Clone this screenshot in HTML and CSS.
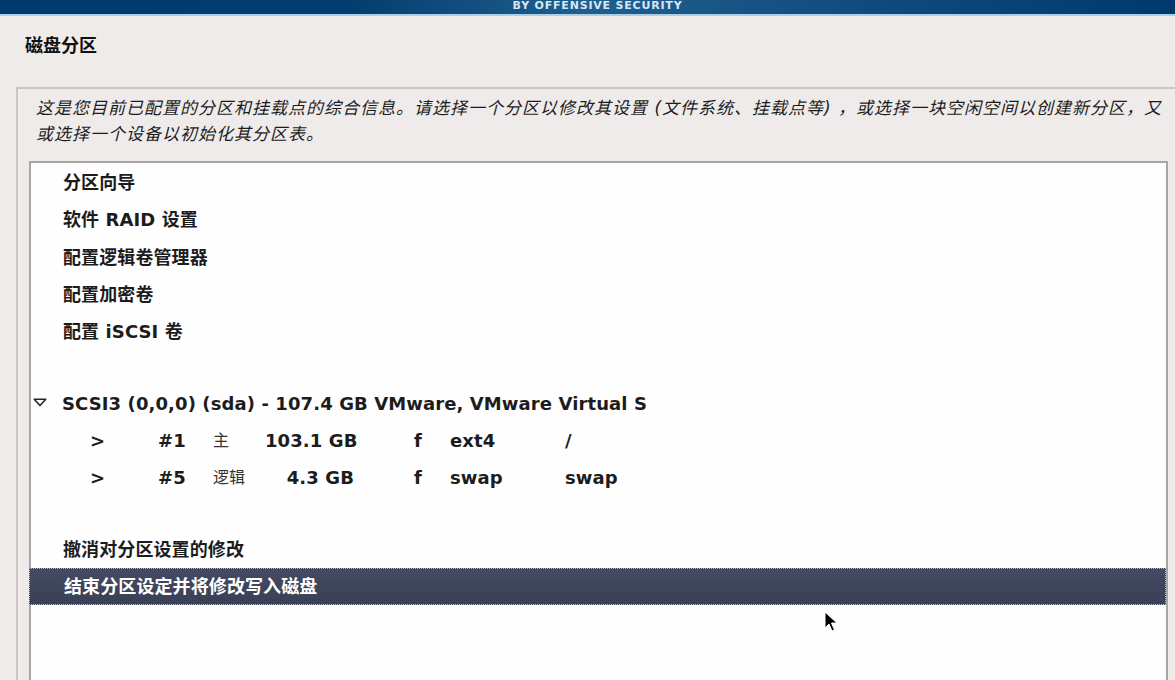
FILE: index.html
```html
<!DOCTYPE html>
<html lang="zh">
<head>
<meta charset="utf-8">
<title>磁盘分区</title>
<link rel="stylesheet" href="styles.css">
</head>
<body>
<div class="banner"><span class="banner-text">BY OFFENSIVE SECURITY</span></div>
<h1 class="title">磁盘分区</h1>
<div class="frame">
  <p class="desc">这是您目前已配置的分区和挂载点的综合信息。请选择一个分区以修改其设置 (文件系统、挂载点等) ，或选择一块空闲空间以创建新分区，又<br>或选择一个设备以初始化其分区表。</p>
  <div class="list">
    <div class="row">分区向导</div>
    <div class="row">软件 RAID 设置</div>
    <div class="row">配置逻辑卷管理器</div>
    <div class="row">配置加密卷</div>
    <div class="row">配置 iSCSI 卷</div>
    <div class="spacer"></div>
    <div class="row disk">
      <svg class="tri" width="14" height="9" viewBox="0 0 14 9"><path d="M1.2 1.2 H12.8 L7 7.6 Z" fill="none" stroke="#222" stroke-width="1.5" stroke-linejoin="round"/></svg>
      <span>SCSI3 (0,0,0) (sda) - 107.4 GB VMware, VMware Virtual S</span>
    </div>
    <div class="row part">
      <span class="c-arrow">&gt;</span><span class="c-num">#1</span><span class="c-type">主</span><span class="c-size">103.1 GB</span><span class="c-f">f</span><span class="c-fs">ext4</span><span class="c-mnt">/</span>
    </div>
    <div class="row part">
      <span class="c-arrow">&gt;</span><span class="c-num">#5</span><span class="c-type">逻辑</span><span class="c-size">4.3 GB</span><span class="c-f">f</span><span class="c-fs">swap</span><span class="c-mnt">swap</span>
    </div>
    <div class="spacer"></div>
    <div class="row">撤消对分区设置的修改</div>
    <div class="row selected">结束分区设定并将修改写入磁盘</div>
  </div>
</div>
<svg class="cursor" width="14" height="22" viewBox="0 0 14 22"><path d="M1 1 V17 L5 13 L8 20 L10.5 19 L7.5 12 H13 Z" fill="#000" stroke="#fff" stroke-width="1"/></svg>
</body>
</html>
```
FILE: styles.css
```css
html, body {
  margin: 0;
  padding: 0;
}
body {
  width: 1175px;
  height: 680px;
  overflow: hidden;
  background: #eeebe9;
  font-family: "DejaVu Sans", "Noto Sans CJK SC", sans-serif;
  color: #1c1c1c;
  position: relative;
}
.banner {
  height: 14px;
  overflow: hidden;
  background: linear-gradient(to right, #003a6c 0%, #043e70 30%, #1f5f8f 50%, #0f4a7c 75%, #003a6c 100%);
  border-bottom: 2px solid #a9cfe9;
  text-align: center;
}
.banner-text {
  display: block;
  font-family: "DejaVu Sans", sans-serif;
  font-weight: bold;
  font-size: 11px;
  letter-spacing: 0.8px;
  line-height: 12px;
  margin-top: 0;
  color: #d6e8f6;
  padding-left: 20px;
}
.title {
  margin: 0;
  padding: 20px 0 0 25px;
  height: 52px;
  box-sizing: border-box;
  font-size: 18px;
  line-height: 20px;
  font-weight: bold;
  color: #111;
}
.frame {
  margin: 19px 0 0 16px;
  width: 1170px;
  height: 600px;
  border-top: 2px solid #c9c6c4;
  border-left: 2px solid #c9c6c4;
  background: #eeebea;
}
.desc {
  margin: 0;
  padding: 6px 0 0 18px;
  width: 1150px;
  white-space: nowrap;
  font-size: 17px;
  line-height: 26px;
  font-style: italic;
  letter-spacing: 1px;
  color: #1c1c1c;
}
.list {
  margin: 14px 0 0 11px;
  width: 1135px;
  height: 560px;
  background: #fefefe;
  border-top: 2px solid #a8a6a4;
  border-left: 2px solid #a8a6a4;
  border-right: 2px solid #a8a6a4;
  padding-top: 1px;
}
.row {
  height: 37.3px;
  line-height: 37px;
  padding-left: 32px;
  font-size: 18px;
  font-weight: bold;
  letter-spacing: 0.1px;
  white-space: nowrap;
  display: flex;
  align-items: center;
}
.spacer {
  height: 34px;
}
.disk {
  padding-left: 2px;
}
.tri {
  margin-right: 15px;
  margin-top: -1px;
}
.part {
  padding-left: 59px;
}
.part span {
  display: inline-block;
}
.c-arrow { width: 68px; }
.c-num { width: 55px; }
.c-type { width: 52px; font-size: 16px; font-weight: normal; color: #333; }
.c-size { width: 89px; text-align: right; }
.c-f { width: 36px; margin-left: 60px; }
.c-fs { width: 115px; }
.c-mnt { width: 100px; }
.selected {
  margin-left: -2px;
  padding-left: 34px;
  width: 1101px;
  height: 35.3px;
  line-height: 35px;
  color: #fff;
  background: linear-gradient(to bottom, #434a63, #3a4054);
  border: 1px dotted #b8bcc8;
}
.cursor {
  position: absolute;
  left: 824px;
  top: 611px;
}
```
